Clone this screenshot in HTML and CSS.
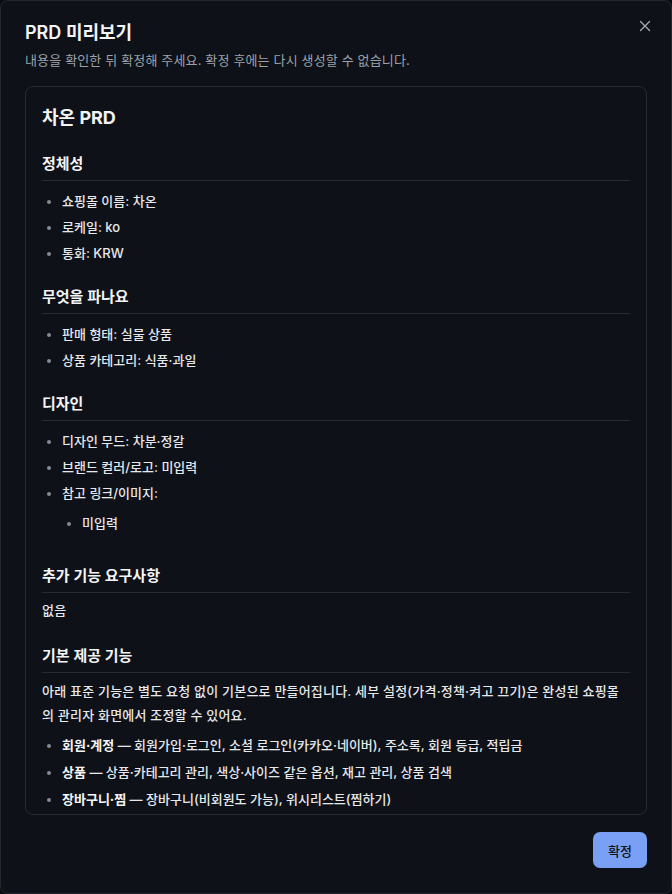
FILE: index.html
```html
<!DOCTYPE html>
<html lang="ko">
<head>
    <meta charset="UTF-8">
    <meta name="viewport" content="width=device-width, initial-scale=1.0">
    <title>PRD 미리보기</title>
    <link rel="stylesheet" href="styles.css">
</head>
<body>
    <div class="dialog">
        <button class="close" aria-label="닫기">
            <svg width="12" height="12" viewBox="0 0 12 12" fill="none" stroke="currentColor" stroke-width="1.4" stroke-linecap="round">
                <path d="M1.5 1.5l9 9M10.5 1.5l-9 9"/>
            </svg>
        </button>

        <div class="head">
            <h2 class="title">PRD 미리보기</h2>
            <p class="desc">내용을 확인한 뒤 확정해 주세요. 확정 후에는 다시 생성할 수 없습니다.</p>
        </div>

        <!-- 미리보기 본문 -->
        <div class="preview">
            <h1>차온 PRD</h1>

            <h3>정체성</h3>
            <ul>
                <li>쇼핑몰 이름: 차온</li>
                <li>로케일: ko</li>
                <li>통화: KRW</li>
            </ul>

            <h3>무엇을 파나요</h3>
            <ul>
                <li>판매 형태: 실물 상품</li>
                <li>상품 카테고리: 식품·과일</li>
            </ul>

            <h3>디자인</h3>
            <ul>
                <li>디자인 무드: 차분·정갈</li>
                <li>브랜드 컬러/로고: 미입력</li>
                <li>참고 링크/이미지:
                    <ul>
                        <li>미입력</li>
                    </ul>
                </li>
            </ul>

            <h3>추가 기능 요구사항</h3>
            <p class="first">없음</p>

            <h3>기본 제공 기능</h3>
            <p>아래 표준 기능은 별도 요청 없이 기본으로 만들어집니다. 세부 설정(가격·정책·켜고 끄기)은 완성된 쇼핑몰의 관리자 화면에서 조정할 수 있어요.</p>
            <ul>
                <li><strong>회원·계정</strong> — 회원가입·로그인, 소셜 로그인(카카오·네이버), 주소록, 회원 등급, 적립금</li>
                <li><strong>상품</strong> — 상품·카테고리 관리, 색상·사이즈 같은 옵션, 재고 관리, 상품 검색</li>
                <li><strong>장바구니·찜</strong> — 장바구니(비회원도 가능), 위시리스트(찜하기)</li>
            </ul>
        </div>

        <div class="foot">
            <button class="confirm">확정</button>
        </div>
    </div>
</body>
</html>
```

FILE: styles.css
```css
* {
    box-sizing: border-box;
}
body {
    margin: 0;
    background-color: #0a0c10;
    font-family: Inter, "Noto Sans CJK KR", sans-serif;
    color: #e6e8ec;
}
.dialog {
    position: relative;
    width: 672px;
    height: 894px;
    background-color: #0e1117;
    border: 1px solid #23272f;
    border-radius: 8px;
    padding: 18px 24px 0;
    display: flex;
    flex-direction: column;
}
.close {
    position: absolute;
    top: 18px;
    right: 19px;
    width: 14px;
    height: 14px;
    padding: 1px;
    border: none;
    background: none;
    color: #a3a8b0;
    cursor: pointer;
    display: flex;
}
.title {
    margin: 0;
    font-size: 18px;
    line-height: 28px;
    font-weight: 600;
    color: #f3f4f6;
}
.desc {
    margin: 3px 0 0;
    font-size: 13px;
    line-height: 20px;
    letter-spacing: 0.15px;
    color: #9ca1aa;
}
.preview {
    margin-top: 16px;
    height: 729px;
    overflow: hidden;
    border: 1px solid #262a32;
    border-radius: 8px;
    padding: 17px 16px 16px;
    font-size: 13px;
    font-weight: 500;
}
.preview h1 {
    margin: 0;
    font-size: 18px;
    line-height: 28px;
    font-weight: 700;
    color: #f3f4f6;
}
.preview h3 {
    margin: 22px 0 0;
    padding-bottom: 4px;
    border-bottom: 1px solid #262a32;
    font-size: 15px;
    line-height: 24px;
    font-weight: 600;
    color: #f3f4f6;
}
.preview h1 + h3 {
    margin-top: 20px;
}
.preview ul {
    margin: 10px 0 0;
    padding-left: 20px;
    list-style: disc;
}
.preview li {
    line-height: 20px;
    margin-top: 6px;
}
.preview li:first-child {
    margin-top: 0;
}
.preview li::marker {
    color: #858a93;
    font-size: 12px;
}
.preview ul ul {
    margin-top: 10px;
    padding-bottom: 9px;
    list-style: disc;
}
.preview p {
    margin: 6px 0 0;
    line-height: 24px;
    letter-spacing: 0.2px;
}
.preview p.first {
    margin-top: 5px;
}
.preview p + ul {
    margin-top: 8px;
}
.preview p + ul li {
    margin-top: 7px;
}
.preview p + ul li:first-child {
    margin-top: 0;
}
.preview strong {
    font-weight: 700;
    color: #f5f6f8;
}
.foot {
    display: flex;
    justify-content: flex-end;
    padding-top: 17px;
}
.confirm {
    height: 36px;
    padding: 0 15px;
    border: none;
    border-radius: 7px;
    background-color: #7aa0f6;
    color: #111318;
    font-family: Inter, "Noto Sans CJK KR", sans-serif;
    font-size: 13px;
    font-weight: 500;
    cursor: pointer;
}
```
